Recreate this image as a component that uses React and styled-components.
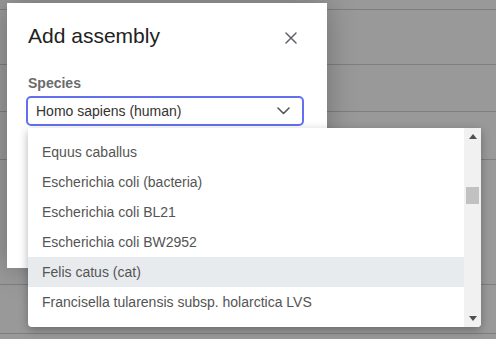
import { createGlobalStyle } from "styled-components";
import styled from "styled-components";

const species = [
  "Equus caballus",
  "Escherichia coli (bacteria)",
  "Escherichia coli BL21",
  "Escherichia coli BW2952",
  "Felis catus (cat)",
  "Francisella tularensis subsp. holarctica LVS",
];

const backdropRows = [9, 54, 46, 47, 124, 48, 20];

function App() {
  return (
    <>
      <GlobalStyle />
      <Page>
        <Backdrop>
          {backdropRows.map((h, i) => (
            <BackdropRow key={i} $height={h} />
          ))}
        </Backdrop>
        <Dialog>
          <Header>
            <Title>Add assembly</Title>
            <CloseButton aria-label="Close">
              <svg width="12" height="12" viewBox="0 0 12 12">
                <path
                  d="M1 1 L11 11 M11 1 L1 11"
                  stroke="#5f6368"
                  strokeWidth="1.5"
                  strokeLinecap="round"
                />
              </svg>
            </CloseButton>
          </Header>
          <Label>Species</Label>
          <SelectWrap>
            <Select>
              <span>Homo sapiens (human)</span>
              <svg width="13" height="8" viewBox="0 0 13 8">
                <path
                  d="M1 1 L6.5 6.5 L12 1"
                  fill="none"
                  stroke="#555"
                  strokeWidth="1.6"
                  strokeLinecap="round"
                  strokeLinejoin="round"
                />
              </svg>
            </Select>
            <Menu>
              <Options>
                {species.map((name) => (
                  <Option key={name} $active={name === "Felis catus (cat)"}>
                    {name}
                  </Option>
                ))}
              </Options>
              <Scrollbar>
                <ArrowButton>
                  <svg width="8" height="5" viewBox="0 0 8 5">
                    <path d="M0 5 L4 0 L8 5 Z" fill="#505050" />
                  </svg>
                </ArrowButton>
                <Track>
                  <Thumb />
                </Track>
                <ArrowButton>
                  <svg width="8" height="5" viewBox="0 0 8 5">
                    <path d="M0 0 L8 0 L4 5 Z" fill="#505050" />
                  </svg>
                </ArrowButton>
              </Scrollbar>
            </Menu>
          </SelectWrap>
        </Dialog>
      </Page>
    </>
  );
}

const GlobalStyle = createGlobalStyle`
  body {
    margin: 0;
    font-family: "Liberation Sans", Arial, sans-serif;
  }
`;

const Page = styled.div`
  position: relative;
  width: 496px;
  height: 339px;
  overflow: hidden;
  background: #999;
`;

const Backdrop = styled.div`
  display: flex;
  flex-direction: column;
`;

const BackdropRow = styled.div`
  height: ${(p) => p.$height}px;
  border-bottom: 1px solid #7e7e7e;
`;

const Dialog = styled.div`
  position: absolute;
  top: 3px;
  left: 7px;
  width: 320px;
  height: 265px;
  box-sizing: border-box;
  padding: 21px 25px 0 21px;
  background: #fff;
  box-shadow: 0 0 28px rgba(0, 0, 0, 0.28);
  display: flex;
  flex-direction: column;
`;

const Header = styled.div`
  display: flex;
  align-items: flex-start;
  justify-content: space-between;
`;

const Title = styled.h2`
  margin: 0;
  font-size: 21px;
  line-height: 24px;
  font-weight: 400;
  color: #222;
`;

const CloseButton = styled.button`
  border: none;
  background: none;
  padding: 0;
  margin: 8px 5px 0 0;
  width: 12px;
  height: 12px;
  display: flex;
  cursor: pointer;
`;

const Label = styled.div`
  margin-top: 27px;
  font-size: 14px;
  line-height: 16px;
  font-weight: 700;
  color: #6b6b6b;
`;

const SelectWrap = styled.div`
  position: relative;
  margin: 5px -2px 0;
`;

const Select = styled.div`
  height: 30px;
  box-sizing: border-box;
  border: 2px solid #6371f1;
  border-radius: 5px;
  padding: 0 12px 0 8px;
  display: flex;
  align-items: center;
  justify-content: space-between;
  font-size: 14px;
  color: #333;
`;

const Menu = styled.div`
  position: absolute;
  top: 32px;
  left: 2px;
  width: 453px;
  height: 199px;
  display: flex;
  background: #fff;
  border-radius: 0 0 4px 4px;
  box-shadow: 0 3px 10px rgba(0, 0, 0, 0.3);
  overflow: hidden;
  z-index: 2;
`;

const Options = styled.ul`
  flex: 1;
  margin: 0;
  padding: 9px 0 10px;
  list-style: none;
`;

const Option = styled.li`
  height: 30px;
  line-height: 30px;
  padding-left: 14px;
  font-size: 14px;
  color: #545454;
  white-space: nowrap;
  background: ${(p) => (p.$active ? "#e8ebee" : "transparent")};
`;

const Scrollbar = styled.div`
  width: 17px;
  display: flex;
  flex-direction: column;
  background: #f1f1f1;
`;

const ArrowButton = styled.div`
  height: 17px;
  display: flex;
  align-items: center;
  justify-content: center;
`;

const Track = styled.div`
  flex: 1;
  padding: 42px 2px 0;
`;

const Thumb = styled.div`
  height: 17px;
  background: #c1c1c1;
`;

export default App;
